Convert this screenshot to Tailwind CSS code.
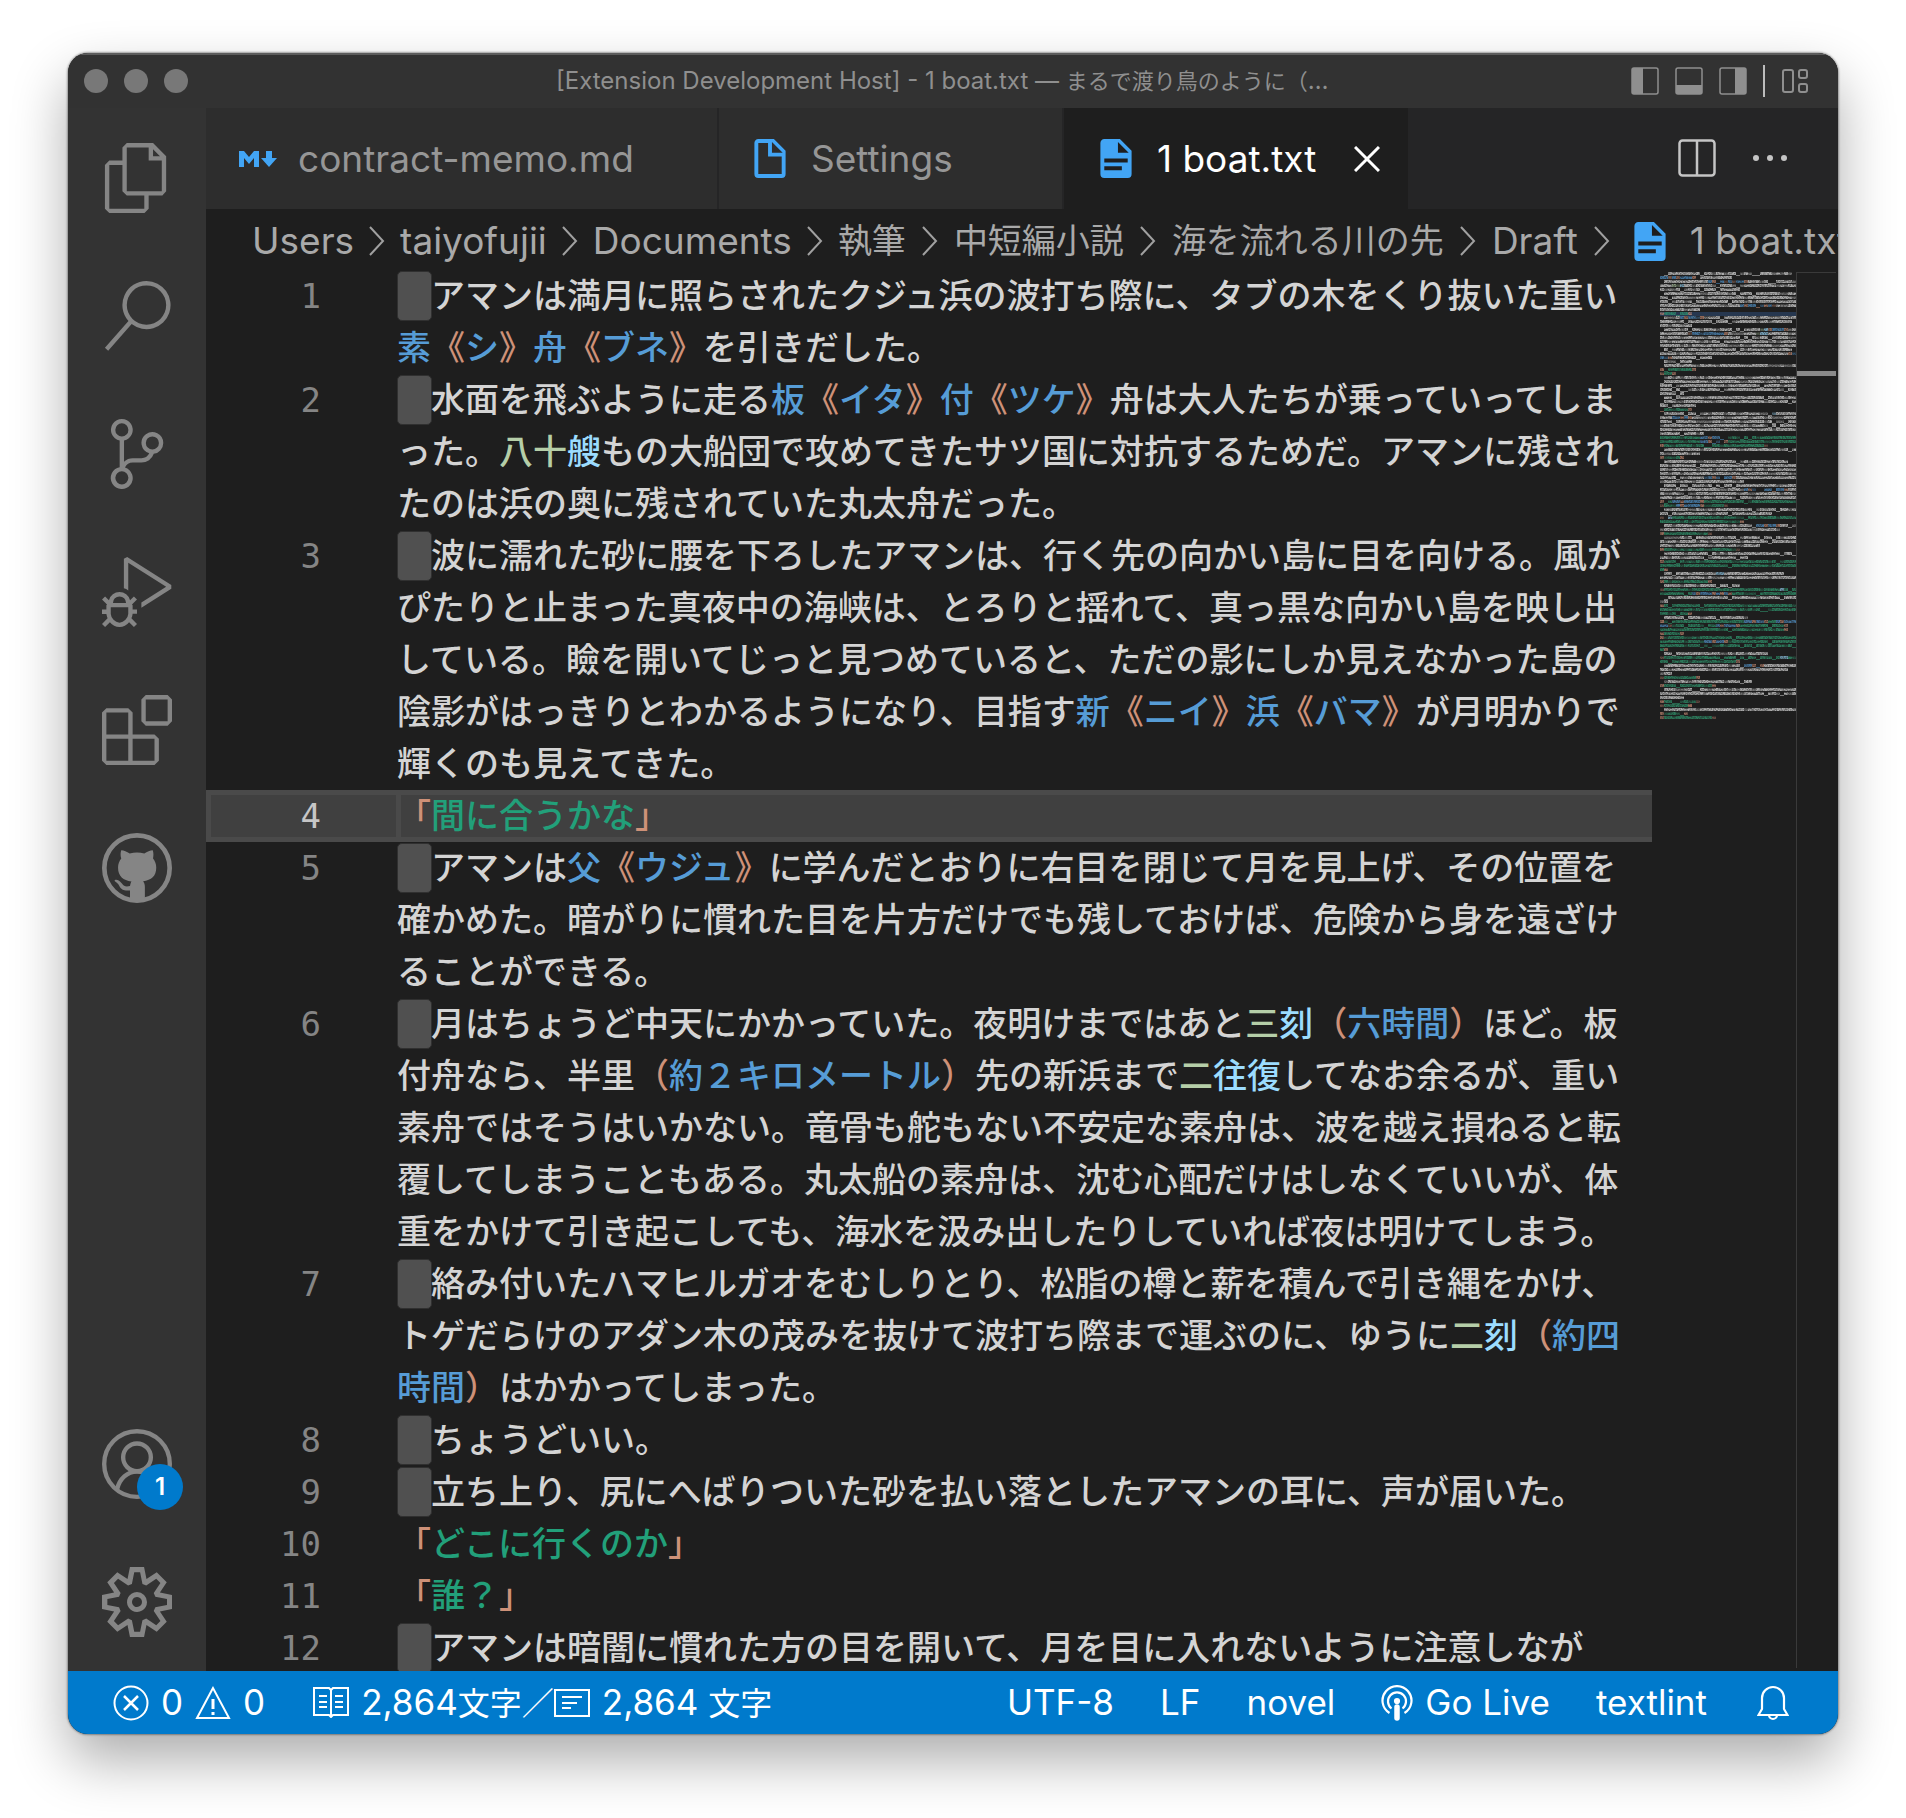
<!DOCTYPE html>
<html lang="ja">
<head>
<meta charset="utf-8">
<title>1 boat.txt</title>
<script src="https://cdn.jsdelivr.net/npm/@tailwindcss/browser@4"></script>
</head>
<body class="bg-white">
<svg class="hidden">
  <symbol id="doc-filled" viewBox="4 2 16 20"><path fill="#42a5f5" d="M13 9h5.5L13 3.500V9M6 2h8l6 6v12a2 2 0 0 1-2 2H6a2 2 0 0 1-2-2V4c0-1.110.890-2 2-2m9 16v-2H6v2h9m3-4v-2H6v2h12z"/></symbol>
  <symbol id="doc-outline" viewBox="4 2 16 20"><path fill="#42a5f5" d="M13 9h5.500L13 3.500V9M6 2h8l6 6v12a2 2 0 0 1-2 2H6a2 2 0 0 1-2-2V4c0-1.110.890-2 2-2m5 2H6v16h12v-9h-7V4z"/></symbol>
  <symbol id="chev" viewBox="0 0 16 30"><path d="M1 1l13 14L1 29" fill="none" stroke="#a0a0a0" stroke-width="2"/></symbol>
</svg>
<div class="h-screen px-[68px] pt-[53px] pb-[84px] font-[Inter,'Noto_Sans_CJK_JP',sans-serif]">
<div class="flex h-full flex-col overflow-hidden rounded-[20px] bg-[#1e1e1e] shadow-[0_0_2px_1px_rgba(0,0,0,0.35),0_26px_56px_rgba(0,0,0,0.33)]">

  <header class="flex h-[55px] shrink-0 items-center border-t-2 border-[#5c5c5c] bg-[#323232] pr-[29px] pb-[2px] pl-4">
    <div class="flex w-[472px] gap-4">
      <button aria-label="Close" class="size-6 rounded-full bg-[#787878]"></button>
      <button aria-label="Minimize" class="size-6 rounded-full bg-[#787878]"></button>
      <button aria-label="Zoom" class="size-6 rounded-full bg-[#787878]"></button>
    </div>
    <h1 class="flex-1 text-[24px] whitespace-nowrap text-[#8f8f8f]">[Extension Development Host] - 1 boat.txt — <span class="text-[22px]">まるで渡り鳥のように（</span>…</h1>
    <div class="flex items-center gap-4 text-[#8f8f8f]">
      <button aria-label="Toggle side bar"><svg class="block size-7" viewBox="0 0 28 28"><rect x="1" y="1" width="26" height="26" rx="2" fill="none" stroke="currentColor" stroke-width="1.500"/><path fill="currentColor" d="M1 1h11v26H1z"/></svg></button>
      <button aria-label="Toggle panel"><svg class="block size-7" viewBox="0 0 28 28"><rect x="1" y="1" width="26" height="26" rx="2" fill="none" stroke="currentColor" stroke-width="1.500"/><path fill="currentColor" d="M1 18h26v9H1z"/></svg></button>
      <button aria-label="Toggle secondary side bar"><svg class="block size-7" viewBox="0 0 28 28"><rect x="1" y="1" width="26" height="26" rx="2" fill="none" stroke="currentColor" stroke-width="1.500"/><path fill="currentColor" d="M16 1h11v26H16z"/></svg></button>
      <span class="h-8 w-[2px] bg-[#bcbcbc]"></span>
      <button aria-label="Customize layout"><svg class="block size-7" viewBox="0 0 28 28" fill="none" stroke="currentColor" stroke-width="2"><rect x="2" y="3" width="10" height="22" rx="2"/><rect x="18" y="3" width="8" height="8" rx="2"/><rect x="18" y="17" width="8" height="8" rx="2"/></svg></button>
    </div>
  </header>

  <div class="flex min-h-0 flex-1">
    <nav class="flex w-[138px] shrink-0 flex-col bg-[#333333] pt-px text-[#858585]">
      <button aria-label="Explorer" class="grid size-[138px] place-items-center"><svg class="size-[70px]" viewBox="0 0 24 24" fill="currentColor"><path d="M17.500 0h-9L7 1.500V6H2.500L1 7.500v15.070L2.500 24h12.070L16 22.570V18h4.700l1.300-1.430V4.500L17.500 0zm0 2.120l2.380 2.380H17.500V2.120zm-3 20.380h-12v-15H7v9.070L8.500 18h6v4.500zm6-6h-12v-15H16V6h4.500v10.500z"/></svg></button>
      <button aria-label="Search" class="grid size-[138px] place-items-center"><svg class="size-[70px]" viewBox="0 0 24 24" fill="currentColor"><path d="M15.250 0a8.250 8.250 0 0 0-6.180 13.720L1 22.880l1.120 1 8.050-9.120A8.251 8.251 0 1 0 15.250.01V0zm0 15a6.750 6.750 0 1 1 0-13.500 6.750 6.750 0 0 1 0 13.500z"/></svg></button>
      <button aria-label="Source Control" class="grid size-[138px] place-items-center"><svg class="size-[70px]" viewBox="0 0 24 24" fill="currentColor"><path d="M21.007 8.222A3.738 3.738 0 0 0 15.045 5.200a3.737 3.737 0 0 0 1.156 6.583 2.988 2.988 0 0 1-2.668 1.670h-2.990a4.456 4.456 0 0 0-2.989 1.165V7.400a3.737 3.737 0 1 0-1.494 0v9.117a3.776 3.776 0 1 0 1.816.099 2.990 2.990 0 0 1 2.668-1.667h2.990a4.484 4.484 0 0 0 4.223-3.039 3.736 3.736 0 0 0 3.250-3.687zM4.565 3.738a2.242 2.242 0 1 1 4.484 0 2.242 2.242 0 0 1-4.484 0zm4.484 16.441a2.242 2.242 0 1 1-4.484 0 2.242 2.242 0 0 1 4.484 0zm8.221-9.715a2.242 2.242 0 1 1 0-4.485 2.242 2.242 0 0 1 0 4.485z"/></svg></button>
      <button aria-label="Run and Debug" class="grid size-[138px] place-items-center"><svg class="size-[70px]" viewBox="0 0 24 24" fill="currentColor"><path d="M10.940 13.500l-1.320 1.320a3.730 3.730 0 0 0-7.240 0L1.060 13.500 0 14.560l1.720 1.720-.220.220V18H0v1.500h1.500v.080c.077.489.214.966.410 1.420L0 22.940 1.060 24l1.650-1.650A4.308 4.308 0 0 0 6 24a4.310 4.310 0 0 0 3.290-1.650L10.940 24 12 22.940 10.090 21c.198-.464.336-.951.410-1.450v-.100H12V18h-1.500v-1.500l-.220-.220L12 14.560l-1.060-1.060zM6 13.500a2.250 2.250 0 0 1 2.250 2.250h-4.500A2.250 2.250 0 0 1 6 13.500zm3 6a3.330 3.330 0 0 1-3 3 3.330 3.330 0 0 1-3-3v-2.250h6v2.250zm14.760-9.900v1.260L13.500 17.370V15.600l8.500-5.370L9 2v9.460a5.070 5.070 0 0 0-1.500-.720V.630L8.640 0l15.120 9.600z"/></svg></button>
      <button aria-label="Extensions" class="grid size-[138px] place-items-center"><svg class="size-[70px]" viewBox="0 0 24 24" fill="currentColor"><path d="M13.500 1.500L15 0h7.500L24 1.500V9l-1.500 1.500H15L13.500 9V1.500zm1.500 0V9h7.500V1.500H15zM0 15V6l1.500-1.500H9L10.500 6v7.500H18l1.500 1.500v7.500L18 24H1.500L0 22.500V15zm9-1.500V6H1.500v7.500H9zM9 15H1.500v7.500H9V15zm1.500 7.500H18V15h-7.500v7.500z"/></svg></button>
      <button aria-label="GitHub" class="grid size-[138px] place-items-center"><svg class="size-[70px]" viewBox="0 0 24 24"><circle cx="12" cy="12" r="11.200" fill="none" stroke="currentColor" stroke-width="1.600"/><path fill="currentColor" d="M6.600 5.900c.900 0 1.900.500 2.900 1.100 1.600-.400 3.400-.400 5 0 1-.600 2-1.100 2.900-1.100.300.900.300 1.800.100 2.800.700.900 1.100 1.900 1.100 3.100 0 3-1.700 4.300-4.500 4.700.400.500.600 1.100.600 1.900V23H9.600v-3.300c-2 .200-3-.200-3.700-1.600-.400-.800-.800-1.200-1.500-1.600-.300-.300.100-.500.500-.500 1 .100 1.500.700 2 1.400.600.900 1.300 1.100 2.700.800.100-.600.200-1.100.500-1.600-2.800-.400-4.600-1.700-4.600-4.800 0-1.200.400-2.200 1.100-3.100-.300-.900-.300-1.900 0-2.800z"/></svg></button>
      <div class="flex-1"></div>
      <button aria-label="Accounts" class="relative grid size-[138px] place-items-center"><svg class="size-[70px]" viewBox="0 0 24 24" fill="none" stroke="currentColor" stroke-width="1.500"><circle cx="12" cy="12" r="11.250"/><circle cx="12" cy="9.700" r="4.750"/><path d="M5.200 20.600c.800-3.600 3.500-6 6.800-6s6 2.400 6.800 6"/></svg><span class="absolute top-[69px] left-[69px] size-[46px] rounded-full bg-[#007acc] text-center text-[24px] leading-[46px] font-semibold text-white">1</span></button>
      <button aria-label="Manage" class="grid size-[138px] place-items-center"><svg class="size-[70px]" viewBox="0 0 24 24" fill="currentColor"><path d="M19.850 8.750l4.150.830v4.840l-4.150.830 2.350 3.520-3.430 3.430-3.520-2.350-.830 4.150H9.580l-.830-4.150-3.520 2.350-3.430-3.430 2.350-3.520L0 14.420V9.580l4.150-.830L1.800 5.230 5.230 1.800l3.520 2.350L9.580 0h4.840l.830 4.150 3.520-2.350 3.430 3.430-2.350 3.520zm-1.570 5.070l4-.810v-2l-4-.810-.540-1.300 2.290-3.430-1.430-1.430-3.430 2.290-1.300-.540-.810-4h-2l-.810 4-1.300.540-3.430-2.290-1.430 1.430L6.380 8.900l-.540 1.300-4 .810v2l4 .810.540 1.300-2.290 3.430 1.430 1.430 3.430-2.290 1.300.540.810 4h2l.810-4 1.300-.540 3.430 2.290 1.430-1.430-2.290-3.430.540-1.300zm-8.186-4.672A3.430 3.430 0 0 1 12 8.570 3.440 3.440 0 0 1 15.430 12a3.430 3.430 0 1 1-5.336-2.852zm.956 4.274c.281.188.612.288.950.288A1.700 1.700 0 0 0 13.710 12a1.710 1.710 0 1 0-2.660 1.422z"/></svg></button>
    </nav>

    <main class="flex min-w-0 flex-1 flex-col">
      <div class="flex h-[101px] shrink-0 bg-[#252526] text-[37px] text-[#969696]">
        <button class="flex w-[513px] items-center border-r-2 border-[#252526] bg-[#2d2d2d] pl-[33px]"><svg class="mr-[21px] h-4 w-[38px]" viewBox="0 0 38 16" fill="#42a5f5"><path d="M0 16V0h5l5 6 5-6h5v16h-5V7l-5 6-5-6v9zM27 0h6v7h5l-8 9-8-9h5z"/></svg>contract-memo.md</button>
        <button class="flex w-[345px] items-center border-r-2 border-[#252526] bg-[#2d2d2d] pl-[35px]"><svg class="mr-[25px] h-[39px] w-8"><use href="#doc-outline"/></svg>Settings</button>
        <button class="flex w-[344px] items-center bg-[#1e1e1e] pl-9 text-white"><svg class="mr-[25px] h-[39px] w-8"><use href="#doc-filled"/></svg><span class="w-[197px] text-left">1 boat.txt</span><svg class="size-[26px]" viewBox="0 0 26 26"><path d="M1 1l24 24M25 1L1 25" stroke="white" stroke-width="3"/></svg></button>
        <div class="flex flex-1 items-center justify-end gap-9 pr-[50px] pb-[2px] text-[#c5c5c5]">
          <button aria-label="Split editor"><svg class="block h-[38px] w-[38px]" viewBox="0 0 38 38" fill="none" stroke="currentColor" stroke-width="2.500"><rect x="1.500" y="1.500" width="35" height="35" rx="3"/><path d="M19 2v34"/></svg></button>
          <button aria-label="More actions"><svg class="block h-2 w-9" viewBox="0 0 36 8" fill="currentColor"><circle cx="4" cy="4" r="3"/><circle cx="18" cy="4" r="3"/><circle cx="32" cy="4" r="3"/></svg></button>
        </div>
      </div>

      <div class="flex h-[61px] shrink-0 items-center overflow-hidden pt-[3px] pl-[46px] text-[37px] leading-[58px] whitespace-nowrap text-[#a9a9a9]">
        <a href="#">Users</a><svg class="mx-[15px] h-[30px] w-4 shrink-0"><use href="#chev"/></svg>
        <a href="#">taiyofujii</a><svg class="mx-[15px] h-[30px] w-4 shrink-0"><use href="#chev"/></svg>
        <a href="#">Documents</a><svg class="mx-[15px] h-[30px] w-4 shrink-0"><use href="#chev"/></svg>
        <a href="#" class="text-[34px]">執筆</a><svg class="mx-4 h-[30px] w-4 shrink-0"><use href="#chev"/></svg>
        <a href="#" class="text-[34px]">中短編小説</a><svg class="mx-4 h-[30px] w-4 shrink-0"><use href="#chev"/></svg>
        <a href="#" class="text-[34px]">海を流れる川の先</a><svg class="mx-4 h-[30px] w-4 shrink-0"><use href="#chev"/></svg>
        <a href="#">Draft</a><svg class="mx-4 h-[30px] w-4 shrink-0"><use href="#chev"/></svg>
        <svg class="mr-6 ml-2 h-[39px] w-8 shrink-0"><use href="#doc-filled"/></svg><a href="#">1 boat.txt</a>
      </div>

      <div class="flex min-h-0 flex-1">
        <div id="editor" class="min-w-0 flex-1 overflow-hidden font-[Inter,'Noto_Sans_CJK_JP',sans-serif] text-[34px] leading-[52px] font-medium whitespace-nowrap text-[#d4d4d4]"></div>
        <canvas id="minimap" width="136" height="448" class="mt-[2px] ml-2 h-[448px] w-[136px] shrink-0"></canvas>
        <div class="mt-[2px] mb-[3px] w-[40px] shrink-0 border-t border-l border-[#3a3a3a] pt-[98px]"><div class="h-[5px] bg-[#8a8a8a]"></div></div>
        <div class="w-[2px] shrink-0"></div>
      </div>
    </main>
  </div>

  <footer class="flex h-[63px] shrink-0 items-center bg-[#007acc] pr-[49px] pl-[45px] text-[35px] whitespace-nowrap text-white">
    <button class="mr-12 flex items-center"><svg class="mr-3 size-9" viewBox="0 0 36 36" fill="none" stroke="white" stroke-width="2"><circle cx="18" cy="18" r="16.500"/><path d="M11 11l14 14M25 11L11 25" stroke-width="2.500"/></svg>0<svg class="mr-3 ml-3 size-9" viewBox="0 0 36 36" fill="none" stroke="white" stroke-width="2"><path d="M18 3L2 33h32z"/><path d="M18 14v10M18 27v3" stroke-width="3"/></svg>0</button>
    <button class="flex items-center"><svg class="mr-3 h-[31px] w-9" viewBox="0 0 36 31" fill="none" stroke="white" stroke-width="2"><path d="M18 3l-2-2H1v27h15l2 2 2-2h15V1H20zM18 3v27"/><path d="M6 9h8M6 15h8M6 20h8M22 9h8M22 15h8M22 20h8"/></svg><span>2,864<span class="text-[32px]">文字／</span></span><svg class="mr-3 h-7 w-9" viewBox="0 0 36 28" fill="none" stroke="white" stroke-width="2"><path d="M1 1h34v26H1zM8 8h20M8 14h15M8 19h9"/></svg><span>2,864 <span class="text-[32px]">文字</span></span></button>
    <div class="flex-1"></div>
    <div class="flex items-center gap-[46px]">
      <button>UTF-8</button>
      <button>LF</button>
      <button>novel</button>
      <button class="flex items-center gap-3"><svg class="h-9 w-8" viewBox="0 0 32 36" fill="none" stroke="white" stroke-width="2.200"><path d="M8.500 28A14.500 14.500 0 1 1 23.500 28"/><path d="M10.500 23.500A9 9 0 1 1 21.500 23.500"/><circle cx="16" cy="16" r="2" fill="white"/><path d="M16 22v11" stroke-width="5.500" stroke-linecap="round"/></svg>Go Live</button>
      <button>textlint</button>
      <button aria-label="Notifications" class="ml-1"><svg class="block h-9 w-8" viewBox="0 0 32 36" fill="none" stroke="white" stroke-width="2.200"><path d="M1.500 30h29l-3.500-6V13a11 11 0 0 0-22 0v11z"/><path d="M12 30a4 4 0 0 0 8 0"/></svg></button>
    </div>
  </footer>
</div>
</div>

<script>
// Document text; {b:..} marks ruby, {o:..} brackets, {n:..} numerals, {c:..} counters, {g:..} dialogue.
const doc = [
  "　アマンは満月に照らされたクジュ浜の波打ち際に、タブの木をくり抜いた重い\n{b:素}{o:《}{b:シ}{o:》}{b:舟}{o:《}{b:ブネ}{o:》}を引きだした。",
  "　水面を飛ぶように走る{b:板}{o:《}{b:イタ}{o:》}{b:付}{o:《}{b:ツケ}{o:》}舟は大人たちが乗っていってしま\nった。{n:八十}{c:艘}もの大船団で攻めてきたサツ国に対抗するためだ。アマンに残され\nたのは浜の奥に残されていた丸太舟だった。",
  "　波に濡れた砂に腰を下ろしたアマンは、行く先の向かい島に目を向ける。風が\nぴたりと止まった真夜中の海峡は、とろりと揺れて、真っ黒な向かい島を映し出\nしている。瞼を開いてじっと見つめていると、ただの影にしか見えなかった島の\n陰影がはっきりとわかるようになり、目指す{b:新}{o:《}{b:ニイ}{o:》}{b:浜}{o:《}{b:バマ}{o:》}が月明かりで\n輝くのも見えてきた。",
  "{o:「}{g:間に合うかな}{o:」}",
  "　アマンは{b:父}{o:《}{b:ウジュ}{o:》}に学んだとおりに右目を閉じて月を見上げ、その位置を\n確かめた。暗がりに慣れた目を片方だけでも残しておけば、危険から身を遠ざけ\nることができる。",
  "　月はちょうど中天にかかっていた。夜明けまではあと{n:三}{c:刻}{o:（}{b:六時間}{o:）}ほど。板\n付舟なら、半里{o:（}{b:約２キロメートル}{o:）}先の新浜まで{n:二}{c:往復}してなお余るが、重い\n素舟ではそうはいかない。竜骨も舵もない不安定な素舟は、波を越え損ねると転\n覆してしまうこともある。丸太船の素舟は、沈む心配だけはしなくていいが、体\n重をかけて引き起こしても、海水を汲み出したりしていれば夜は明けてしまう。",
  "　絡み付いたハマヒルガオをむしりとり、松脂の樽と薪を積んで引き縄をかけ、\nトゲだらけのアダン木の茂みを抜けて波打ち際まで運ぶのに、ゆうに{n:二}{c:刻}{o:（}{b:約四}\n{b:時間}{o:）}はかかってしまった。",
  "　ちょうどいい。",
  "　立ち上り、尻にへばりついた砂を払い落としたアマンの耳に、声が届いた。",
  "{o:「}{g:どこに行くのか}{o:」}",
  "{o:「}{g:誰？}{o:」}",
  "　アマンは暗闇に慣れた方の目を開いて、月を目に入れないように注意しなが"
];
const colour = { b: "text-[#569cd6]", o: "text-[#ce9178]", n: "text-[#b5cea8]", c: "text-[#9cdcfe]", g: "text-[#22a07a]" };
const activeLine = 4;
document.getElementById("editor").innerHTML = doc.map((line, i) => {
  const on = i + 1 === activeLine;
  const html = line
    .replace(/\{(\w):([^}]*)\}/g, (_, k, t) => `<span class="${colour[k]}">${t}</span>`)
    .replace(/^　/, '<span class="inline-block w-[35px] -mr-px rounded-[5px] border border-[#303030] bg-[#505050] leading-[48px]">　</span>')
    .replace(/\n/g, "<br>");
  return `<div class="flex ${on ? "bg-[#404040]" : ""}">
    <div class="w-[190px] shrink-0 pr-[75px] text-right font-['DejaVu_Sans_Mono',monospace] font-normal ${on ? "text-[#c6c6c6] shadow-[inset_5px_0_0_#4a4a4a,inset_0_5px_0_#4a4a4a,inset_0_-5px_0_#4a4a4a]" : "text-[#858585]"}">${i + 1}</div>
    <div class="flex-1 pl-px ${on ? "shadow-[inset_5px_0_0_#4a4a4a,inset_0_5px_0_#4a4a4a,inset_0_-5px_0_#4a4a4a]" : ""}">${html}</div>
  </div>`;
}).join("");

// Minimap: one entry per wrapped row, runs of colour + length in 4px cells.
const rows = "_1w32 b2o1b1o1b3o1_1w8 _1w11b1o1b2o1b1o1b2o1w13 w3n2c1w28 w20 _1w33 w34 w34 w20b1o1b2o1b1o1b1o1w5 w10 o1g6o1 _1w4b1o1b3o1w23 w33 w8 _1w24n1c1o1b3o1w2 w7o1b8o1w7n1c2w7 w34 w34 w34 _1w32 w32o1b1 b2o1w10 _1w7 _1w33 o1g7o1 o1g2o1 _1w33 w34 w34 w34 w6 _1w33 w34 w9 o1g6o1 _1w27c1w5 w3b2o1b1o1w26 w34 w34 w34 w11 g10b2o1b3_1g17 g10b2o1b2_1o1g17 o1g25o1 _1w33 w10 o1g4o1 _1w31 w34 w34 w34 w11b2o1b1_1b2o1w15 w21 _1w33 w21b1o1b1_2b2o1b2o1w2 w34 w34 o1g2b2o1b4o1g24 o1g3b1o1b4o1g5o1 _1w33 w28 o1_1c1g31 g20o1 _1w23b2o1b2o1w4 w30 o1g11o1 _1w33 w34 w25 o1g18o1 _1w33 w22 o1g33 g34 g1o1 _1w13c2w15 w34 o1g11o1 _1w19 o1g29c1g3 g8b1o1b3o1b1o1b1o1g16 _1w33 w2 o1g33 g34 g7o1 _1w21 o1g20b2o1b2o1g2b1o1b3 b2o1g11b1o1b3o1g11o1 g31o1 o1g4o1 o1g33 g11b2o1b2o1g17 g34 g1o1 _1w26 o1g29c2g2 g19o1 _1w20b2o1b1o1w8 w32 w3 o1g8o1 _1w22 o1g12o1 _1w33 w34 w6 o1g8o1 o1g6o1 _1w33 o1g5o1 o1g12o1".split(" ");
const ink = { w: "212,212,212", b: "86,156,214", o: "206,145,120", n: "181,206,168", c: "156,220,254", g: "50,165,120" };
const ctx = document.getElementById("minimap").getContext("2d");
let seed = 7;
const rnd = () => (seed = (seed * 16807) % 2147483647) / 2147483647;
rows.forEach((r, y) => {
  if (y === 10) { ctx.fillStyle = "#26374f"; ctx.fillRect(0, y * 4, 136, 4); }
  let x = 0;
  for (const [, k, n] of r.matchAll(/([a-z_])(\d+)/g)) {
    for (let i = 0; i < n; i++, x++) {
      if (k === "_") continue;
      const kind = rnd(), base = k === "w" ? 0.66 : 0.58;
      if (kind < 0.05) { ctx.fillStyle = `rgba(${ink[k]},0.5)`; ctx.fillRect(x * 4, y * 4 + 3, 4, 1); continue; }
      const a = base * (kind < 0.2 ? 0.6 : 1);
      for (let c = 0; c < 4; c++) for (let d = 0; d < 3; d++) {
        ctx.fillStyle = `rgba(${ink[k]},${(a * (0.6 + rnd() * 0.6) * (d === 0 && kind < 0.4 ? 0.5 : 1)).toFixed(2)})`;
        ctx.fillRect(x * 4 + c, y * 4 + d, 1, 1);
      }
    }
  }
});
</script>
</body>
</html>
